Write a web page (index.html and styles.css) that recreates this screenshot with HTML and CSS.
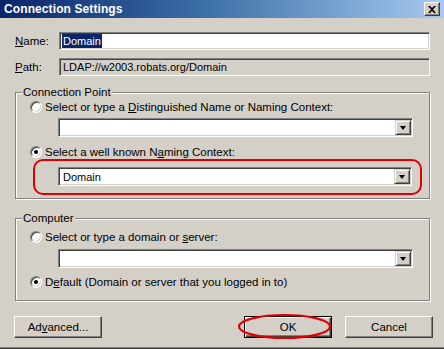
FILE: index.html
```html
<!DOCTYPE html>
<html>
<head>
<meta charset="utf-8">
<link rel="stylesheet" href="styles.css">
</head>
<body>
<div class="window">
  <div class="titlebar">
    <span class="title">Connection Settings</span>
    <span class="close"><svg width="8" height="7" viewBox="0 0 8 7"><path d="M0 0h2l2 2 2-2h2L5 3.5 8 7H6L4 5 2 7H0l3-3.5z" fill="#000"/></svg></span>
  </div>
  <div class="content">
    <div class="field-row">
      <span class="label"><u>N</u>ame:</span>
      <div class="textbox"><span class="selected">Domain</span></div>
    </div>
    <div class="field-row path-row">
      <span class="label"><u>P</u>ath:</span>
      <div class="textbox readonly">LDAP://w2003.robats.org/Domain</div>
    </div>

    <div class="group group-cp">
      <div class="legend">Connection Point</div>
      <div class="radio-row r1"><span class="radio"></span><span>Select or type a <u>D</u>istinguished Name or Naming Context:</span></div>
      <div class="combo c1"><span class="combo-text"></span><span class="drop"><i></i></span></div>
      <div class="radio-row r2"><span class="radio checked"></span><span>Select a well known N<u>a</u>ming Context:</span></div>
      <div class="highlight">
        <div class="combo c2"><span class="combo-text">Domain</span><span class="drop"><i></i></span></div>
      </div>
    </div>

    <div class="group group-pc">
      <div class="legend">Computer</div>
      <div class="radio-row r3"><span class="radio"></span><span>Select or type a domain or <u>s</u>erver:</span></div>
      <div class="combo c3"><span class="combo-text"></span><span class="drop"><i></i></span></div>
      <div class="radio-row r4"><span class="radio checked"></span><span>D<u>e</u>fault (Domain or server that you logged in to)</span></div>
    </div>

    <div class="buttons">
      <div class="btn adv">Ad<u>v</u>anced...</div>
      <div class="spacer"></div>
      <div class="ok-wrap">
        <div class="btn default">OK</div>
        <svg class="ring" width="96" height="28" viewBox="0 0 96 28"><ellipse cx="47.5" cy="13.5" rx="45.5" ry="11.5" fill="none" stroke="#e00000" stroke-width="2.2"/></svg>
      </div>
      <div class="btn cancel">Cancel</div>
    </div>
  </div>
</div>
</body>
</html>
```

FILE: styles.css
```css
* { box-sizing: border-box; }
html, body { margin: 0; padding: 0; }
body {
  font-family: "Liberation Sans", Arial, sans-serif;
  font-size: 11.5px;
  color: #000;
  background: #d4d0c8;
}
.window {
  width: 444px;
  height: 349px;
  background: #d4d0c8;
  overflow: hidden;
  box-shadow: inset 0 -1px #404040, inset 0 -2px #808080;
}
.titlebar {
  height: 18px;
  display: flex;
  align-items: center;
  padding-left: 4px;
  padding-right: 4px;
  background: linear-gradient(to right, #0a246a 0%, #3a6ea5 45%, #a6caf0 100%);
}
.title {
  color: #fff;
  font-weight: bold;
  font-size: 12px;
  letter-spacing: 0.1px;
}
.close {
  margin-left: auto;
  width: 16px;
  height: 14px;
  background: #d4d0c8;
  display: flex;
  align-items: center;
  justify-content: center;
  border: 1px solid;
  border-color: #fff #404040 #404040 #fff;
  box-shadow: inset -1px -1px #808080;
}
.content {
  padding: 0 14px 0 15px;
}
.field-row {
  display: flex;
  align-items: center;
  height: 18px;
  margin-top: 14px;
}
.path-row { margin-top: 8px; }
.label { width: 44px; }
.textbox {
  flex: 1;
  height: 18px;
  background: #fff;
  border: 1px solid;
  border-color: #808080 #fff #fff #808080;
  box-shadow: inset 1px 1px #404040, inset -1px -1px #d4d0c8;
  padding: 0 2px;
  display: flex;
  align-items: center;
  font-size: 11px;
}
.textbox.readonly { background: #d4d0c8; padding-left: 3px; }
.selected {
  background: #0a246a;
  color: #fff;
  padding: 0 1px;
  line-height: 14px;
}
.group {
  border: 1px solid #808080;
  box-shadow: 1px 1px 0 #fff, inset 1px 1px 0 #fff;
  padding: 0 16px 0 14px;
}
.group-cp { margin-top: 16px; height: 107px; }
.group-pc { margin-top: 19px; height: 83px; }
.legend {
  margin-top: -7px;
  margin-left: -8px;
  height: 13px;
  line-height: 13px;
  width: fit-content;
  padding: 0 1px;
  background: #d4d0c8;
}
.radio-row {
  display: flex;
  align-items: center;
  height: 12px;
  gap: 3px;
  white-space: nowrap;
}
.r1 { margin-top: 2px; }
.r2 { margin-top: 9px; }
.r3 { margin-top: 6px; }
.r4 { margin-top: 8px; }
.radio {
  width: 12px;
  height: 12px;
  border-radius: 50%;
  background: #fff;
  border: 1px solid;
  border-color: #808080 #fff #fff #808080;
  box-shadow: inset 1px 1px #404040, inset -1px -1px #d4d0c8;
  display: flex;
  align-items: center;
  justify-content: center;
  flex: none;
}
.radio.checked::after {
  content: "";
  width: 4px;
  height: 4px;
  border-radius: 50%;
  background: #000;
}
.combo {
  height: 19px;
  margin-left: 28px;
  background: #fff;
  border: 1px solid;
  border-color: #808080 #fff #fff #808080;
  box-shadow: inset 1px 1px #404040, inset -1px -1px #d4d0c8;
  padding: 1px;
  display: flex;
  align-items: stretch;
}
.c1 { margin-top: 5px; }
.c3 { margin-top: 6px; }
.combo-text {
  flex: 1;
  padding-left: 3px;
  display: flex;
  align-items: center;
  font-size: 11px;
}
.drop {
  width: 16px;
  background: #d4d0c8;
  border: 1px solid;
  border-color: #d4d0c8 #404040 #404040 #d4d0c8;
  box-shadow: inset 1px 1px #fff, inset -1px -1px #808080;
  display: flex;
  align-items: center;
  justify-content: center;
}
.drop i {
  width: 0;
  height: 0;
  border-left: 3.5px solid transparent;
  border-right: 3.5px solid transparent;
  border-top: 4px solid #000;
  margin-top: 1px;
}
.highlight {
  margin-top: 1px;
  margin-left: 3px;
  margin-right: -9px;
  height: 36px;
  border: 2px solid #e00000;
  border-radius: 10px;
  padding: 6px 8px 0 0;
}
.highlight .combo { margin-left: 23px; }
.buttons {
  display: flex;
  margin-top: 15px;
  margin-left: -1px;
  margin-right: -3px;
  height: 22px;
}
.spacer { flex: 1; }
.btn {
  width: 88px;
  height: 22px;
  display: flex;
  align-items: center;
  justify-content: center;
  background: #d4d0c8;
  border: 1px solid;
  border-color: #fff #404040 #404040 #fff;
  box-shadow: inset -1px -1px #808080;
  font-size: 11.5px;
}
.btn.default {
  border: 1px solid #000;
  box-shadow: inset 1px 1px #fff, inset -1px -1px #404040, inset -2px -2px #808080;
}
.ok-wrap { position: relative; margin-right: 13px; }
.ring {
  position: absolute;
  left: -7px;
  top: -3px;
}
```
